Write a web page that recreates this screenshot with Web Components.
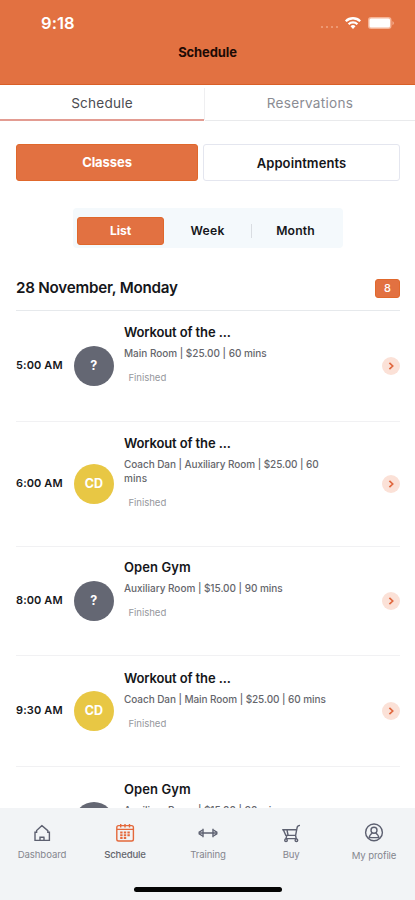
<!DOCTYPE html>
<html lang="en">
<head>
<meta charset="utf-8">
<title>Schedule</title>
<style>
html,body{margin:0;height:100%;overflow:hidden;background:#fff}
body{font-family:Inter,"Liberation Sans",sans-serif;color:#15161a}
</style>
</head>
<body>
<gym-app></gym-app>
<script>
// Single-line text tracked to a given width.
class TrackedText extends HTMLElement {
  connectedCallback() {
    const slot = this.querySelector('slot');
    if (slot) this.textContent = slot.assignedNodes().map(n => n.textContent).join('');
    if (!this.shadowRoot) this.attachShadow({mode:'open'}).innerHTML =
      `<style>:host{display:block;flex:none;white-space:nowrap;width:max-content}span{display:inline-block}</style><span><slot></slot></span>`;
    const s = this.shadowRoot.querySelector('span');
    const w = parseFloat(this.getAttribute('w')), n = this.textContent.length;
    const nat = s.getBoundingClientRect().width;
    s.style.letterSpacing = ((w + 0.7 - nat) / n) + 'px';
  }
}
const make = (name, html) => customElements.define(name, class extends HTMLElement {
  connectedCallback() {
    if (this.shadowRoot) return;
    const t = document.createElement('template');
    t.innerHTML = typeof html === 'function' ? html(this) : html;
    this.attachShadow({mode:'open'}).append(t.content.cloneNode(true));
  }
});

make('status-bar', `
<style>
:host{display:flex;height:45px;box-sizing:border-box;padding:1px 20px 0 41px;align-items:center;justify-content:space-between;color:#fff;font-size:16.5px;font-weight:600}
svg{display:block}
</style>
<tracked-text w="33">9:18</tracked-text>
<svg width="75" height="16" viewBox="320 15 75 16">
<g fill="#f0a683"><circle cx="322" cy="27" r="1"/><circle cx="327" cy="27" r="1"/><circle cx="332" cy="27" r="1"/><circle cx="337" cy="27" r="1"/></g>
<g fill="none" stroke="#fff" stroke-width="2.3"><path d="M345.8 21.2a10.3 10.3 0 0 1 14.4 0"/><path d="M348.6 24.2a6.3 6.3 0 0 1 8.8 0"/></g>
<path fill="#fff" d="M350.5 26.2a3.8 3.8 0 0 1 5 0L353 29z"/>
<rect x="368" y="17" width="23.5" height="12" rx="3.2" fill="#f5b497"/><rect x="369.5" y="18.5" width="20.5" height="9" rx="1.5" fill="#fff"/>
<path fill="#f5b497" d="M392.5 21v4.2c1.8-.8 1.8-3.4 0-4.2z"/></svg>`);

make('app-header', `
<style>
:host{display:block;height:85px;box-sizing:border-box;background:#e27141;border-bottom:1.5px solid #d95f27}
.t{display:flex;justify-content:center;font-size:13px;font-weight:700;line-height:14px;color:#1d0b05}
</style>
<slot></slot><div class="t"><tracked-text w="58">Schedule</tracked-text></div>`);

make('page-tabs', `
<style>
:host{display:flex;height:36px;font-size:13.6px;color:#8b8c93}
div{flex:1;display:flex;justify-content:center;align-items:center;box-sizing:border-box;border-bottom:1px solid #e9eaec;padding-top:1px}
.a{flex:0 0 204px;color:#4b4c52;border-bottom:2px solid #e39c92;padding-top:2px}
i{width:1px;background:#efeff1;margin:3px 0 1px}
</style>
<div class="a"><tracked-text w="61">Schedule</tracked-text></div><i></i><div><tracked-text w="86">Reservations</tracked-text></div>`);

make('kind-switch', `
<style>
:host{display:flex;gap:5px;margin:23px 15px 0 16px;height:37px;font-size:13px;font-weight:700}
div{display:flex;justify-content:center;align-items:center;box-sizing:border-box;border-radius:3px}
.a{width:182px;background:#e27141;border:1.5px solid #e0682c;color:#fff;padding-bottom:2px}
.b{width:197px;border:1.5px solid #e4e6ef;font-weight:600;padding-top:1px}
</style>
<div class="a"><tracked-text w="49">Classes</tracked-text></div>
<div class="b"><tracked-text w="89">Appointments</tracked-text></div>`);

make('range-switch', `
<style>
:host{display:flex;align-items:center;margin:27px 0 0 73px;width:270px;height:40px;box-sizing:border-box;padding:5px 4px 0;background:#f4f9fc;border-radius:4px;font-size:12.2px;font-weight:600}
div{width:87px;height:28px;display:flex;justify-content:center;align-items:center;box-sizing:border-box}
.a{background:#e27141;border:1px solid #e0682c;border-radius:3px;color:#fff;font-weight:700}
i{width:1px;height:14px;background:#d9dde2}
</style>
<div class="a"><tracked-text w="20.5">List</tracked-text></div>
<div><tracked-text w="33.5">Week</tracked-text></div><i></i>
<div><tracked-text w="38">Month</tracked-text></div>`);

make('day-heading', `
<style>
:host{display:flex;align-items:center;justify-content:space-between;margin:16px 15px 0 16px;height:47px;box-sizing:border-box;border-bottom:1px solid #e6e9ec;font-size:15.2px;font-weight:600}
b{width:25px;height:19px;border-radius:3px;background:#e27141;border:1px solid #e0682c;box-sizing:border-box;color:#fff;font-size:11px;line-height:16px;text-align:center;font-weight:500;margin-top:2px}
</style>
<tracked-text w="161">28 November, Monday</tracked-text><b>8</b>`);

make('class-row', el => {
  const a = k => el.getAttribute(k);
  const meta = a('meta').split(';').map(m => { const [t, w] = m.split('~'); return `<tracked-text w="${w}">${t}</tracked-text>`; }).join('');
  const cd = a('who') === 'CD';
  return `
<style>
:host{display:flex;align-items:center;flex:none;margin:0 15px 0 16px;height:${a('h')}px;box-sizing:border-box;border-bottom:1.5px solid #f1f1f3}
.time{width:58px;font-size:11px;font-weight:600;padding-bottom:2px}
.av{width:40px;height:40px;border-radius:50%;background:#646773;color:#fff;display:flex;align-items:center;justify-content:center;font-weight:700;font-size:12.5px;box-sizing:border-box;padding-bottom:1px}
.av.cd{background:#e8c744}
.c{flex:1;align-self:flex-start;padding:${a('top') || 12}px 0 0 10px}
.t{font-size:13px;font-weight:600;line-height:18px;margin-bottom:5px}
.m{font-size:10px;line-height:14px;color:#65666c;font-weight:500}
.f{font-size:9.6px;line-height:14px;color:#96979d;margin:11px 0 0 4.5px}
svg{display:block;margin-bottom:1px}
</style>
<div class="time">${a('time') ? `<tracked-text w="46">${a('time')}</tracked-text>` : ''}</div>
<div class="av ${cd ? 'cd' : ''}">${a('who') ? `<tracked-text w="${cd ? 18 : 7}">${a('who')}</tracked-text>` : ''}</div>
<div class="c"><div class="t"><tracked-text w="${a('tw')}"><slot></slot></tracked-text></div><div class="m">${meta}</div>${a('status') ? `<div class="f"><tracked-text w="37">${a('status')}</tracked-text></div>` : ''}</div>
<svg width="18" height="18" viewBox="0 0 18 18"><circle cx="9" cy="9" r="9" fill="#fbe1d7"/><path d="M7.4 5.8 10.7 9l-3.3 3.2" fill="none" stroke="#e0683f" stroke-width="1.7"/></svg>`;
});

make('nav-item', el => `
<style>
:host{display:flex;flex-direction:column;align-items:center;width:83px;flex:none;box-sizing:border-box;padding-top:${el.getAttribute('top') || 13}px;color:#5d6070}
.l{margin-top:${el.getAttribute('gap') || 3}px;font-size:9.6px;line-height:14px;color:#85868e}
:host([on]) .l{color:#64656d;font-weight:500}
::slotted(svg){display:block}
</style>
<slot></slot><div class="l"><tracked-text w="${el.getAttribute('w')}">${el.getAttribute('label')}</tracked-text></div>`);

make('bottom-nav', `
<style>
:host{display:flex;flex-direction:column;height:92px;flex:none;background:#f2f4f6}
.r{display:flex;height:79px;margin-left:.5px}
.h{width:148px;height:4.5px;border-radius:3px;background:#050505;margin-left:134px}
svg{fill:none;stroke:currentColor;stroke-width:1.4}
</style>
<div class="r">
<nav-item label="Dashboard" w="48"><svg width="24" height="24" viewBox="0 0 24 24"><path d="M12 4.6 6.6 9.6v1.6H5v8.2h14.4v-8.2h-1.6V9.6zM9.3 16.2h5.2M10 19v-2.8M14 19v-2.8"/></svg></nav-item>
<nav-item on label="Schedule" w="41"><svg style="color:#e4683b" width="24" height="24" viewBox="0 0 24 24"><rect x="3.8" y="4.6" width="16.6" height="15.4" rx="1.8"/><path d="M4 8.4h16.4M7.7 3v3.6M12 3v3.6M16.5 3v3.6"/><path stroke-width="2" stroke-dasharray="2.4 1.2" d="M7.2 11.4h9.6M7.2 14.2h9.6M7.2 16.9h6"/></svg></nav-item>
<nav-item label="Training" w="35"><svg width="24" height="24" viewBox="0 0 24 24"><path d="M3.4 12h17.2M7 7.8v8.4M17 7.8v8.4"/><path d="M6.6 9 3.2 11.2v1.6L6.6 15M17.4 9l3.4 2.2v1.6L17.4 15"/></svg></nav-item>
<nav-item label="Buy" w="16"><svg width="24" height="24" viewBox="0 0 24 24"><path d="M3.2 8.7h14.3M4.4 9l2.4 5.4h9.8M21 4.4q-2.5 0-2.9 2.2l-1.5 7.8.6 3.2H7l.8-3.2M8 9l1 5"/><circle cx="7" cy="19.2" r="1.3"/><circle cx="17.4" cy="19.2" r="1.3"/></svg></nav-item>
<nav-item label="My profile" w="44" top="12" gap="5"><svg width="24" height="24" viewBox="0 0 24 24"><circle cx="12" cy="12.4" r="8.4"/><circle cx="12" cy="10.2" r="3"/><path d="M7 18.4q.4-3.8 3.4-5.4M17 18.4q-.4-3.8-3.4-5.4M7 17.6h10"/></svg></nav-item>
</div><div class="h"></div>`);

make('gym-app', `
<style>
:host{display:flex;flex-direction:column;width:415px;height:900px;background:#fff;overflow:hidden}
main{flex:1;min-height:0;overflow:hidden;display:flex;flex-direction:column}
main>*{flex:none}
</style>
<app-header><status-bar></status-bar></app-header>
<main>
<page-tabs></page-tabs>
<kind-switch></kind-switch>
<range-switch></range-switch>
<day-heading></day-heading>
<class-row h="111" time="5:00 AM" who="?" tw="106" status="Finished" meta="Main Room | $25.00 | 60 mins~142">Workout of the ...</class-row>
<class-row h="125" time="6:00 AM" who="CD" tw="106" status="Finished" meta="Coach Dan | Auxiliary Room | $25.00 | 60~194;mins~22.5">Workout of the ...</class-row>
<class-row h="109" top="11" time="8:00 AM" who="?" tw="66" status="Finished" meta="Auxiliary Room | $15.00 | 90 mins~158">Open Gym</class-row>
<class-row h="111" top="13" time="9:30 AM" who="CD" tw="106" status="Finished" meta="Coach Dan | Main Room | $25.00 | 60 mins~201">Workout of the ...</class-row>
<class-row h="111" top="13" tw="66" meta="Auxiliary Room | $15.00 | 90 mins~158">Open Gym</class-row>
</main>
<bottom-nav></bottom-nav>`);

customElements.define('tracked-text', TrackedText);
</script>
</body>
</html>
